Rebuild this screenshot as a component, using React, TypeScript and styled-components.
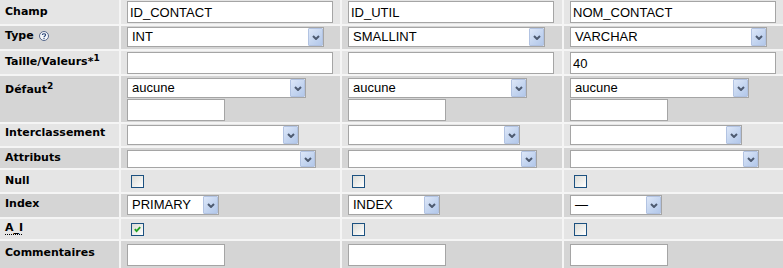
import React from 'react';
import styled, { createGlobalStyle } from 'styled-components';

const GlobalStyle = createGlobalStyle`
  html, body { margin: 0; padding: 0; background: #F5F5F5; }
  body { font-family: "DejaVu Sans", Verdana, sans-serif; }
`;

const Grid = styled.div`
  display: grid;
  width: 783px;
  grid-template-columns: 119px 219px 220px 1fr;
  grid-template-rows: 24px 23px 23px 46px 22px 20px 22px 23px 20px 27px;
  gap: 2px;
  background: #F5F5F5;
`;

type Shade = 'odd' | 'even';

const LabelCell = styled.div<{ $shade: Shade; $pad: number }>`
  background: ${(p) => (p.$shade === 'odd' ? '#E5E5E5' : '#D5D5D5')};
  padding: ${(p) => p.$pad}px 0 0 5px;
  font: bold 11px/13px "DejaVu Sans", Verdana, sans-serif;
  color: #000;
  white-space: nowrap;
  overflow: hidden;
`;

const DataCell = styled.div<{ $shade: Shade; $pad: number }>`
  background: ${(p) => (p.$shade === 'odd' ? '#E5E5E5' : '#D5D5D5')};
  padding: ${(p) => p.$pad}px 0 0 6px;
  display: flex;
  flex-direction: column;
  align-items: flex-start;
  gap: 1px;
  overflow: hidden;
`;

const Sup = styled.sup`
  font-size: 9px;
  line-height: 0;
  vertical-align: 4px;
`;

const Abbr = styled.abbr`
  text-decoration: underline dotted;
  text-underline-offset: 3px;
  cursor: help;
`;

const HelpIcon = styled.svg`
  vertical-align: -2px;
  margin-left: 1px;
`;

const TextField = styled.input<{ $w: number; $h: number }>`
  box-sizing: border-box;
  width: ${(p) => p.$w}px;
  height: ${(p) => p.$h}px;
  margin: 0;
  border: 1px solid #A5A5A5;
  background: #fff;
  padding: 0 0 0 2px;
  font: 13px "Liberation Sans", Arial, sans-serif;
  color: #000;
  outline: none;
  flex: none;
`;

const SelectBox = styled.div<{ $w: number; $h: number }>`
  box-sizing: border-box;
  width: ${(p) => p.$w}px;
  height: ${(p) => p.$h}px;
  border: 1px solid #A5A5A5;
  background: #fff;
  display: flex;
  align-items: stretch;
  flex: none;
`;

const SelectValue = styled.span<{ $h: number }>`
  flex: 1;
  padding-left: 4px;
  font: 13px "Liberation Sans", Arial, sans-serif;
  line-height: ${(p) => p.$h - 2}px;
  color: #000;
  white-space: nowrap;
  overflow: hidden;
`;

const ArrowButton = styled.span`
  width: 15px;
  box-sizing: border-box;
  border: 1px solid #B2C3E2;
  border-radius: 1px;
  background: linear-gradient(135deg, #DDE7F8 0%, #C4D5F0 55%, #B3C8EA 100%);
  display: flex;
  align-items: center;
  justify-content: center;
`;

const CheckBox = styled.span`
  box-sizing: border-box;
  width: 13px;
  height: 13px;
  margin-left: 4px;
  border: 1px solid #1C5180;
  background: linear-gradient(135deg, #DCDCD7 0%, #F4F4F2 70%, #FFFFFF 100%);
  display: flex;
  align-items: center;
  justify-content: center;
  flex: none;
`;

const Chevron = () => (
  <svg width="8" height="5" viewBox="0 0 8 5">
    <polyline points="1,1 4,4 7,1" fill="none" stroke="#4D5A70" strokeWidth="2" />
  </svg>
);

const Select = ({ value, w, h = 20 }: { value: string; w: number; h?: number }) => (
  <SelectBox $w={w} $h={h}>
    <SelectValue $h={h}>{value}</SelectValue>
    <ArrowButton>
      <Chevron />
    </ArrowButton>
  </SelectBox>
);

const Check = ({ checked }: { checked?: boolean }) => (
  <CheckBox>
    {checked && (
      <svg width="7" height="7" viewBox="0 0 7 7">
        <polyline points="0.8,3.2 2.6,5.2 6.2,1.2" fill="none" stroke="#21A121" strokeWidth="1.8" />
      </svg>
    )}
  </CheckBox>
);

const Help = () => (
  <HelpIcon width="10" height="10" viewBox="0 0 10 10">
    <circle cx="5" cy="5" r="4.5" fill="#F4F6FA" stroke="#56678A" />
    <path d="M3.4 3.9 C3.4 2.4 6.6 2.4 6.6 3.9 C6.6 5 5 4.9 5 6.2" fill="none" stroke="#2F4A7A" strokeWidth="1.1" />
    <rect x="4.45" y="7" width="1.1" height="1.1" fill="#2F4A7A" />
  </HelpIcon>
);

type Field = { name: string; type: string; size: string; index: string; ai: boolean };

const fields: Field[] = [
  { name: 'ID_CONTACT', type: 'INT', size: '', index: 'PRIMARY', ai: true },
  { name: 'ID_UTIL', type: 'SMALLINT', size: '', index: 'INDEX', ai: false },
  { name: 'NOM_CONTACT', type: 'VARCHAR', size: '40', index: '—', ai: false },
];

type RowDef = {
  key: string;
  label: React.ReactNode;
  labelPad: number;
  cellPad: number;
  render: (f: Field) => React.ReactNode;
};

const rows: RowDef[] = [
  { key: 'champ', label: 'Champ', labelPad: 5, cellPad: 1,
    render: (f) => <TextField $w={206} $h={22} defaultValue={f.name} /> },
  { key: 'type', label: <>Type <Help /></>, labelPad: 3, cellPad: 1,
    render: (f) => <Select value={f.type} w={197} /> },
  { key: 'taille', label: <>Taille/Valeurs*<Sup>1</Sup></>, labelPad: 4, cellPad: 1,
    render: (f) => <TextField $w={206} $h={22} defaultValue={f.size} /> },
  { key: 'defaut', label: <>Défaut<Sup>2</Sup></>, labelPad: 7, cellPad: 2,
    render: () => (
      <>
        <Select value="aucune" w={179} />
        <TextField $w={98} $h={22} defaultValue="" />
      </>
    ) },
  { key: 'inter', label: 'Interclassement', labelPad: 2, cellPad: 1,
    render: () => <Select value="" w={172} /> },
  { key: 'attr', label: 'Attributs', labelPad: 3, cellPad: 2,
    render: () => <Select value="" w={189} h={18} /> },
  { key: 'null', label: 'Null', labelPad: 4, cellPad: 5,
    render: () => <Check /> },
  { key: 'index', label: 'Index', labelPad: 3, cellPad: 1,
    render: (f) => <Select value={f.index} w={92} /> },
  { key: 'ai', label: <Abbr title="AUTO_INCREMENT">A_I</Abbr>, labelPad: 2, cellPad: 4,
    render: (f) => <Check checked={f.ai} /> },
  { key: 'comm', label: 'Commentaires', labelPad: 5, cellPad: 3,
    render: () => <TextField $w={98} $h={22} defaultValue="" /> },
];

export default function App() {
  return (
    <>
      <GlobalStyle />
      <Grid>
        {rows.map((r, i) => {
          const shade: Shade = i % 2 === 0 ? 'odd' : 'even';
          return (
            <React.Fragment key={r.key}>
              <LabelCell $shade={shade} $pad={r.labelPad}>{r.label}</LabelCell>
              {fields.map((f) => (
                <DataCell key={f.name} $shade={shade} $pad={r.cellPad}>
                  {r.render(f)}
                </DataCell>
              ))}
            </React.Fragment>
          );
        })}
      </Grid>
    </>
  );
}
